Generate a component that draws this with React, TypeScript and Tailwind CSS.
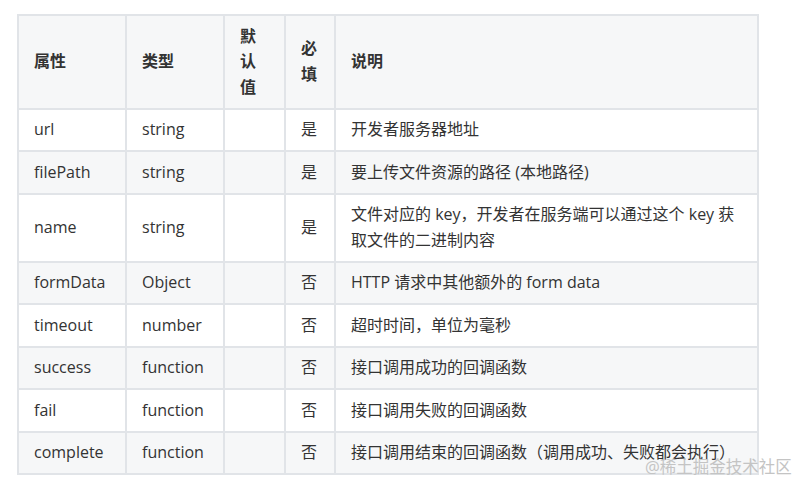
import React from "react";

type Row = { name: string; type: string; def: string; req: string; desc: string };

const rows: Row[] = [
  { name: "url", type: "string", def: "", req: "是", desc: "开发者服务器地址" },
  { name: "filePath", type: "string", def: "", req: "是", desc: "要上传文件资源的路径 (本地路径)" },
  { name: "name", type: "string", def: "", req: "是", desc: "文件对应的 key，开发者在服务端可以通过这个 key 获取文件的二进制内容" },
  { name: "formData", type: "Object", def: "", req: "否", desc: "HTTP 请求中其他额外的 form data" },
  { name: "timeout", type: "number", def: "", req: "否", desc: "超时时间，单位为毫秒" },
  { name: "success", type: "function", def: "", req: "否", desc: "接口调用成功的回调函数" },
  { name: "fail", type: "function", def: "", req: "否", desc: "接口调用失败的回调函数" },
  { name: "complete", type: "function", def: "", req: "否", desc: "接口调用结束的回调函数（调用成功、失败都会执行）" },
];

const cell = "border-r-2 border-b-2 border-[#e1e4e8] px-[15px] py-[7.5px] flex items-center";

export default function App() {
  return (
    <div
      className="relative w-[800px] h-[483px] bg-white text-[16px] leading-[25.5px] text-[#333333] overflow-hidden"
      style={{ fontFamily: '"Open Sans", "Noto Sans CJK SC", sans-serif' }}
    >
      <div className="pt-[14px] pl-[17px]">
        <div className="grid grid-cols-[108px_98px_61px_50px_423px] w-[742px] border-l-2 border-t-2 border-[#e1e4e8]">
          <div className={`${cell} bg-[#f6f7f8] font-bold`}>属性</div>
          <div className={`${cell} bg-[#f6f7f8] font-bold`}>类型</div>
          <div className={`${cell} bg-[#f6f7f8] font-bold`}>默认值</div>
          <div className={`${cell} bg-[#f6f7f8] font-bold`}>必填</div>
          <div className={`${cell} bg-[#f6f7f8] font-bold`}>说明</div>
          {rows.map((r, i) => {
            const bg = i % 2 === 1 ? "bg-[#f6f7f8]" : "bg-white";
            return (
              <React.Fragment key={r.name}>
                <div className={`${cell} ${bg}`}>{r.name}</div>
                <div className={`${cell} ${bg}`}>{r.type}</div>
                <div className={`${cell} ${bg}`}>{r.def}</div>
                <div className={`${cell} ${bg}`}>{r.req}</div>
                <div className={`${cell} ${bg}`}>{r.desc}</div>
              </React.Fragment>
            );
          })}
        </div>
      </div>
      <div className="absolute left-[645px] top-[456px] text-[16.5px] leading-[22px] text-[#c4c4c4] whitespace-nowrap">
        @稀土掘金技术社区
      </div>
    </div>
  );
}
